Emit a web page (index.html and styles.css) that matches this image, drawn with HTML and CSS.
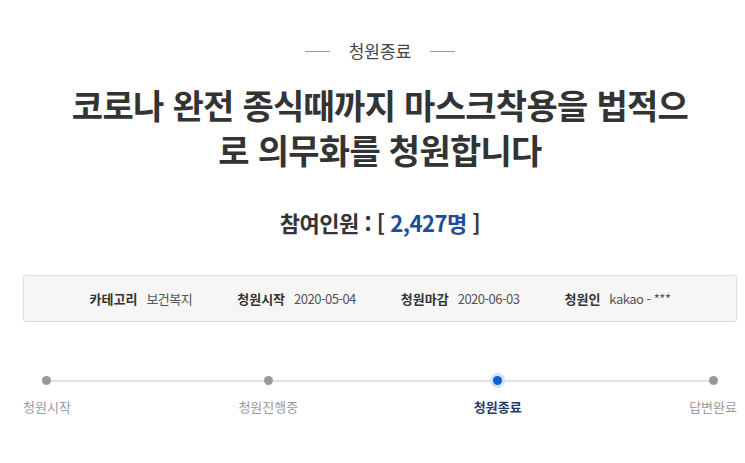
FILE: index.html
```html
<!DOCTYPE html>
<html lang="ko">
<head>
<meta charset="utf-8">
<link rel="stylesheet" href="styles.css">
</head>
<body>
<div class="page">
  <div class="status"><span class="status-line"></span><span class="status-text">청원종료</span><span class="status-line"></span></div>
  <h1 class="title">코로나 완전 종식때까지 마스크착용을 법적으<br>로 의무화를 청원합니다</h1>
  <div class="count">참여인원 : [ <span class="count-num">2,427명</span> ]</div>
  <ul class="info">
    <li><strong>카테고리</strong><span>보건복지</span></li>
    <li><strong>청원시작</strong><span>2020-05-04</span></li>
    <li><strong>청원마감</strong><span>2020-06-03</span></li>
    <li><strong>청원인</strong><span>kakao - ***</span></li>
  </ul>
  <ol class="steps">
    <li class="step"><span class="dot"></span><span class="label">청원시작</span></li>
    <li class="step mid"><span class="dot"></span><span class="label">청원진행중</span></li>
    <li class="step active"><span class="dot"></span><span class="label">청원종료</span></li>
    <li class="step"><span class="dot"></span><span class="label">답변완료</span></li>
  </ol>
</div>
</body>
</html>
```
FILE: styles.css
```css
html, body {
  margin: 0;
  padding: 0;
  background: #fff;
}
body {
  font-family: "Noto Sans CJK KR", "Noto Sans", sans-serif;
  color: #333;
}
.page {
  width: 714px;
  margin-left: 23px;
  padding-top: 39px;
}
.status {
  display: flex;
  justify-content: center;
  align-items: center;
  gap: 19px;
  height: 24px;
}
.status-text {
  font-size: 17px;
  line-height: 24px;
  color: #444;
}
.status-line {
  width: 25px;
  height: 1px;
  background: #999;
}
.title {
  margin: 19px 0 0;
  text-align: center;
  font-size: 34px;
  line-height: 45px;
  font-weight: 700;
  letter-spacing: -0.7px;
  color: #333;
}
.count {
  margin-top: 35px;
  text-align: center;
  font-size: 22px;
  line-height: 30px;
  font-weight: 700;
  color: #333;
  letter-spacing: -0.5px;
}
.count-num {
  color: #1c4d97;
}
.info {
  list-style: none;
  margin: 38px 0 0;
  padding: 0;
  height: 45px;
  border: 1px solid #ddd;
  border-radius: 3px;
  background: #f6f6f6;
  display: flex;
  justify-content: center;
  align-items: center;
  gap: 45px;
  font-size: 13px;
}
.info li {
  display: flex;
  gap: 9px;
}
.info strong {
  color: #333;
  font-weight: 700;
}
.info span {
  color: #555;
  letter-spacing: -0.5px;
}
.steps {
  list-style: none;
  margin: 54px 0 0;
  padding: 0;
  display: flex;
  justify-content: space-between;
  position: relative;
}
.steps::before {
  content: "";
  position: absolute;
  left: 23px;
  right: 23px;
  top: 4px;
  height: 2px;
  background: #e3e3e3;
}
.step {
  display: flex;
  flex-direction: column;
  align-items: center;
  gap: 13px;
  position: relative;
}
.step.mid {
  margin-right: 8px;
}
.dot {
  width: 9px;
  height: 9px;
  border-radius: 50%;
  background: #999;
}
.active .dot {
  background: #0b63d1;
  box-shadow: 0 0 0 3px #cfe3fb;
}
.label {
  font-size: 13px;
  line-height: 18px;
  color: #999;
}
.active .label {
  color: #1e3b6b;
  font-weight: 700;
}
```
